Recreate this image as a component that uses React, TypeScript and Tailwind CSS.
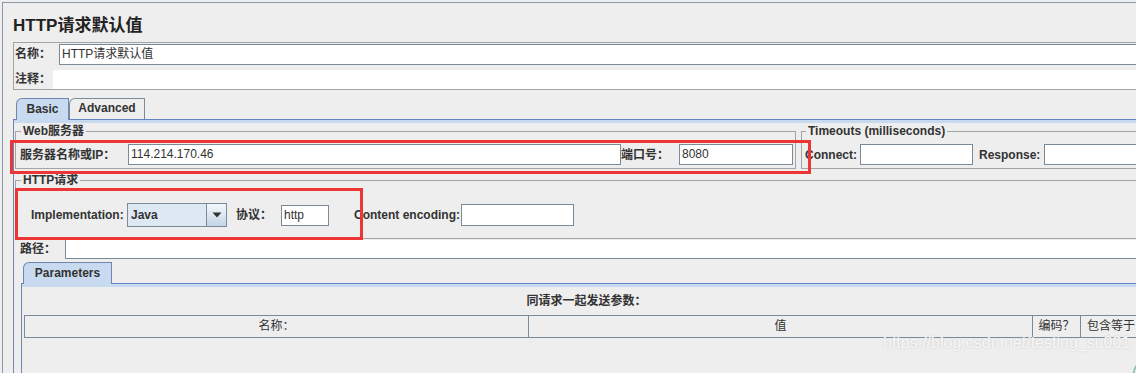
import React from "react";

const FONT = "font-['Liberation_Sans','Noto_Sans_CJK_SC',sans-serif]";

const Field = ({ w, h = "h-[21px]", value }: { w: string; h?: string; value?: string }) => (
  <div className={`${w} ${h} shrink-0 border border-[#7a8a99] bg-white pl-[2px] text-[12px] leading-[19px] text-[#333] overflow-hidden whitespace-nowrap`}>
    {value}
  </div>
);

const Label = ({ w, children, className = "" }: { w: string; children: React.ReactNode; className?: string }) => (
  <div className={`${w} shrink-0 font-bold text-[12px] whitespace-nowrap ${className}`}>{children}</div>
);

const App = () => {
  return (
    <div className={`relative w-[1136px] h-[373px] overflow-hidden bg-[#eeeeee] text-[#333] text-[12px] ${FONT}`}>
      <div className="ml-[2px] mt-[2px] w-[1200px] h-[400px] border-l border-t border-[#8a99a8]">
        {/* title */}
        <div className="h-[39px] pl-[10px] pt-[13px] text-[17px] font-bold leading-[20px] text-[#222]">
          HTTP请求默认值
        </div>

        {/* name / comment */}
        <div className="ml-[10px] border border-[#a3a3a3]">
          <div className="flex h-[23px] pt-[1px]">
            <Label w="w-[45px]" className="pl-[1px] leading-[21px]">名称：</Label>
            <div className="flex-1 h-[21px] border border-[#7a8a99] bg-white pl-[2px] leading-[19px]">
              HTTP请求默认值
            </div>
          </div>
          <div className="flex h-[23px] pt-[4px]">
            <Label w="w-[39px]" className="pl-[1px] leading-[19px]">注释：</Label>
            <div className="flex-1 h-[19px] bg-white" />
          </div>
        </div>

        {/* Basic / Advanced tabs */}
        <div className="ml-[10px] mt-[8px]">
          <div className="flex items-end h-[22px] pl-[3px] border-b border-[#6382bf]">
            <div className="relative -mb-px h-[22px] w-[53px] border border-b-0 border-[#6f87b0] bg-[#c8daef] rounded-tl-[6px] text-center font-bold leading-[20px]">
              Basic
            </div>
            <div className="h-[21px] w-[76px] border border-b-0 border-[#7a8a99] rounded-tl-[6px] text-center font-bold leading-[19px]">
              Advanced
            </div>
          </div>

          <div className="h-[300px] border-l border-[#6f87b0]">
            <div className="h-[3px] bg-[#c8daef]" />

            {/* web server + timeouts */}
            <div className="flex items-start">
              <fieldset className="ml-[1px] w-[781px] shrink-0 border border-[#a5a5a5]">
                <legend className="ml-[5px] px-[2px] font-bold leading-[16px]">Web服务器</legend>
                <div className="flex items-center pt-[5px] pb-[3px] pl-[4px]">
                  <Label w="w-[108px]">服务器名称或IP：</Label>
                  <Field w="w-[493px]" value="114.214.170.46" />
                  <Label w="w-[58px]">端口号：</Label>
                  <Field w="w-[114px]" value="8080" />
                </div>
              </fieldset>
              <fieldset className="ml-[5px] w-[400px] shrink-0 border border-[#a5a5a5]">
                <legend className="ml-[4px] px-[2px] font-bold leading-[16px]">Timeouts (milliseconds)</legend>
                <div className="flex items-center pt-[5px] pb-[3px] pl-[3px]">
                  <Label w="w-[55px]">Connect:</Label>
                  <Field w="w-[113px]" />
                  <Label w="w-[65px]" className="ml-[6px]">Response:</Label>
                  <Field w="w-[200px]" />
                </div>
              </fieldset>
            </div>

            {/* HTTP request */}
            <fieldset className="ml-[1px] mt-[3px] w-[1180px] border border-[#a5a5a5]">
              <legend className="ml-[5px] px-[2px] font-bold leading-[16px]">HTTP请求</legend>
              <div className="flex items-center h-[24px] mt-[15px] mb-[11px] pl-[15px]">
                <Label w="w-[96px]">Implementation:</Label>
                <div className="flex w-[100px] h-[24px] shrink-0 border border-[#7a8a99] bg-[#dde8f3]">
                  <div className="flex-1 pl-[3px] font-bold leading-[22px]">Java</div>
                  <div className="flex w-[20px] items-center justify-center border-l border-[#7a8a99] bg-gradient-to-b from-[#f4f8fc] to-[#c4d4e7]">
                    <svg width="10" height="6" viewBox="0 0 10 6">
                      <path d="M0.5 0.5 H9.5 L5 5.5 Z" fill="#333" />
                    </svg>
                  </div>
                </div>
                <Label w="w-[45px]" className="ml-[9px]">协议：</Label>
                <Field w="w-[48px]" value="http" />
                <Label w="w-[107px]" className="ml-[25px]">Content encoding:</Label>
                <Field w="w-[113px]" h="h-[22px]" />
              </div>
            </fieldset>

            {/* path */}
            <div className="flex mt-[1px] h-[19px]">
              <Label w="w-[51px]" className="pl-[6px] leading-[18px]">路径：</Label>
              <div className="flex-1 border-l border-b border-[#7a8a99] bg-white" />
            </div>

            {/* parameters tab */}
            <div className="ml-[7px] mt-[3px] w-[1130px]">
              <div className="flex items-end h-[22px] pl-[2px] border-b border-[#6382bf]">
                <div className="relative -mb-px h-[22px] w-[89px] border border-b-0 border-[#6f87b0] bg-[#c8daef] rounded-tl-[6px] text-center font-bold leading-[20px]">
                  Parameters
                </div>
              </div>
              <div className="h-[120px] border-l border-[#6f87b0]">
                <div className="h-[3px] bg-[#c8daef]" />
                <div className="h-[28px] text-center font-bold leading-[28px]">同请求一起发送参数：</div>
                <div className="ml-[2px] flex h-[23px] border-t border-b border-l border-[#7a8a99] leading-[21px]">
                  <div className="w-[504px] shrink-0 border-r border-[#7a8a99] text-center">名称：</div>
                  <div className="w-[504px] shrink-0 border-r border-[#7a8a99] text-center">值</div>
                  <div className="w-[48px] shrink-0 border-r border-[#7a8a99] text-center">编码？</div>
                  <div className="w-[56px] shrink-0 pl-[6px] whitespace-nowrap">包含等于</div>
                </div>
              </div>
            </div>
          </div>
        </div>
      </div>

      {/* red highlight boxes */}
      <div className="absolute left-[10px] top-[140px] w-[801px] h-[34px] border-[3px] border-[#ee3535]" />
      <div className="absolute left-[15px] top-[188px] w-[348px] h-[52px] border-[3px] border-[#ee3535]" />

      {/* watermark */}
      <div className="absolute left-[883px] top-[333px] text-[16px] leading-[20px] text-[#f8f8f8] [text-shadow:0_0_2px_#c4c4c4]">
        https://blog.csdn.net/testing_su001
      </div>
      <div className="absolute left-[1133px] top-[360px] w-[26px] h-[26px] rounded-full border-[2px] border-[#8fc4a4] bg-white" />
    </div>
  );
};

export default App;
